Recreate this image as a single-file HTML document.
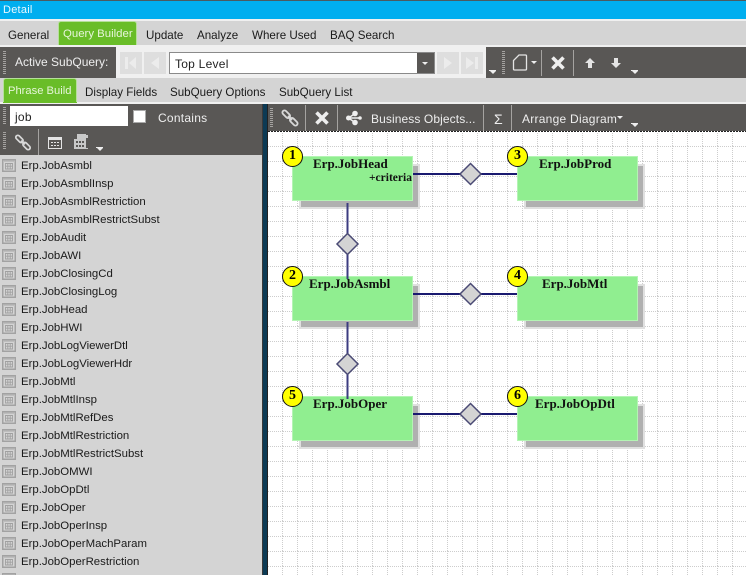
<!DOCTYPE html>
<html><head><meta charset="utf-8">
<style>
html,body{margin:0;padding:0;width:746px;height:575px;overflow:hidden}
#p{position:absolute;left:0;top:0;width:746px;height:575px;overflow:hidden;background:#d4d4d4;font-family:"Liberation Sans",sans-serif;font-size:12px;color:#111}
.a{position:absolute}
.t{position:absolute;white-space:nowrap;line-height:14px;letter-spacing:.25px}
.b{position:absolute;white-space:nowrap;line-height:14px;font-size:11.6px;color:#1a1a1a;margin-top:1px}
.w{color:#eee}
.sep{position:absolute;width:1px;background:#a5a3a1}
.grip{position:absolute;width:3px;background:repeating-linear-gradient(#a5a3a1 0 1px,transparent 1px 2px)}
.dd{position:absolute;width:0;height:0;border-left:3px solid transparent;border-right:3px solid transparent;border-top:3px solid #eee}
.ul{position:absolute;width:7px;height:1px;background:#eee}
.row{position:absolute;left:0;width:262px;height:18px}
.row span{position:absolute;left:21px;top:4px;line-height:14px;font-size:11.4px;color:#1a1a1a;white-space:nowrap}
.row svg{position:absolute;left:2px;top:4px}
.card{position:absolute;width:121px;height:45px;background:#90ee90;border:1px solid #b4f4b4;box-sizing:border-box;box-shadow:7px 8px 0 -2px #b0b0b0,7px 8px 0 0 #e0e0e0}
.n{position:absolute;font:bold 13px/16px "Liberation Serif",serif;color:#111;white-space:nowrap}
.c{position:absolute;width:21px;height:21px;border-radius:50%;background:#ff0;border:1px solid #111;box-sizing:border-box;text-align:center;font:bold 14px/17px "Liberation Serif",serif;color:#000}
</style></head><body><div id="p">
<svg width="0" height="0" style="position:absolute"><defs>
<symbol id="ti" viewBox="0 0 14 13"><rect x=".75" y=".75" width="12.500" height="11.500" fill="#d4d4d4" stroke="#a2a2a2" stroke-width="1.500"/><path d="M1 2.250h12" stroke="#bdbdbd" stroke-width="1.500"/><path d="M3.500 4.500h7v5.500h-7zM5.800 4.500v5.500M8.200 4.500v5.500M3.500 7.200h7" fill="none" stroke="#a0a0a0" stroke-width=".9"/></symbol>
<symbol id="lk" viewBox="0 0 18 18"><path d="M3.500 3.500l3.500 3.500M11 11l3.500 3.500" stroke="#d8d8d8" stroke-width="6" stroke-linecap="round"/><path d="M3.500 3.500l3.500 3.500M11 11l3.500 3.500" stroke="#595755" stroke-width="2.400" stroke-linecap="round"/><path d="M7 7l4 4" stroke="#d8d8d8" stroke-width="2"/></symbol>
</defs></svg>

<div class="a" style="left:0;top:0;width:746px;height:1px;background:#4a5a60"></div>
<div class="a" style="left:0;top:1px;width:746px;height:18px;background:#00aeef"></div>
<div class="t" style="left:3px;top:3px;color:#e8f8ff;font-size:11px">Detail</div>
<div class="a" style="left:0;top:19px;width:746px;height:2px;background:#f0f0f0"></div>
<div class="a" style="left:0;top:45px;width:746px;height:2px;background:#f0f0f0"></div>

<div class="b" style="left:8px;top:28px">General</div>
<div class="a" style="left:58px;top:21px;width:79px;height:24px;background:#69bd28;border:1px solid #b5e09a;border-bottom:0;border-radius:3px 3px 0 0;box-sizing:border-box"></div>
<div class="b" style="left:63px;top:26px;color:#e6f5da;font-size:11.4px">Query Builder</div>
<div class="b" style="left:146px;top:28px">Update</div>
<div class="b" style="left:197px;top:28px">Analyze</div>
<div class="b" style="left:252px;top:28px">Where Used</div>
<div class="b" style="left:330px;top:28px">BAQ Search</div>

<div class="a" style="left:0;top:47px;width:746px;height:31px;background:#595755"></div>
<div class="grip" style="left:3px;top:51px;height:23px"></div>
<div class="t w" style="left:15px;top:55px;letter-spacing:0">Active SubQuery:</div>
<div class="a" style="left:116px;top:47px;width:370px;height:31px;background:#f0f0f0"></div>
<div class="a" style="left:120px;top:52px;width:22px;height:22px;background:#dedede"></div>
<svg class="a" style="left:120px;top:52px" width="22" height="22"><path d="M5 5h3v12H5zM16 5v12L9 11z" fill="#ececec"/></svg>
<div class="a" style="left:144px;top:52px;width:22px;height:22px;background:#dedede"></div>
<svg class="a" style="left:144px;top:52px" width="22" height="22"><path d="M15 5v12L7 11z" fill="#ececec"/></svg>
<div class="a" style="left:169px;top:52px;width:266px;height:22px;background:#fff;border:1px solid #8a8a8a;box-sizing:border-box"></div>
<div class="t" style="left:175px;top:57px;color:#222">Top Level</div>
<div class="a" style="left:417px;top:53px;width:17px;height:20px;background:#595755"></div>
<div class="dd" style="left:422px;top:62px"></div>
<div class="a" style="left:437px;top:52px;width:22px;height:22px;background:#dedede"></div>
<svg class="a" style="left:437px;top:52px" width="22" height="22"><path d="M7 5v12l8-6z" fill="#ececec"/></svg>
<div class="a" style="left:461px;top:52px;width:22px;height:22px;background:#dedede"></div>
<svg class="a" style="left:461px;top:52px" width="22" height="22"><path d="M5 5v12l8-6zM14 5h3v12h-3z" fill="#ececec"/></svg>
<div class="ul" style="left:489px;top:70px"></div><div class="dd" style="left:489.500px;top:71px"></div>
<div class="grip" style="left:502px;top:51px;height:23px"></div>
<svg class="a" style="left:511px;top:53px" width="18" height="20"><path d="M8 2h6.500q1 0 1 1v13q0 1-1 1H3.500q-1 0-1-1V7.500z" fill="none" stroke="#e4e4e4" stroke-width="1.300"/></svg>
<div class="dd" style="left:531px;top:61px"></div>
<div class="sep" style="left:541px;top:50px;height:26px"></div>
<svg class="a" style="left:550px;top:55px" width="16" height="16"><path d="M2.500 2.500l11 11M13.500 2.500l-11 11" stroke="#eee" stroke-width="3.600"/></svg>
<div class="sep" style="left:573px;top:50px;height:26px"></div>
<svg class="a" style="left:583px;top:57px" width="14" height="12"><path d="M7 1l5 5H9v5H5V6H2z" fill="#e4e4e4"/></svg>
<svg class="a" style="left:609px;top:57px" width="14" height="12"><path d="M7 11l5-5H9V1H5v5H2z" fill="#e4e4e4"/></svg>
<div class="ul" style="left:631px;top:70px"></div><div class="dd" style="left:631.500px;top:71px"></div>

<div class="a" style="left:3px;top:78px;width:74px;height:25px;background:#69bd28;border:1px solid #b5e09a;border-bottom:0;border-radius:3px 3px 0 0;box-sizing:border-box"></div>
<div class="b" style="left:8px;top:83px;color:#e6f5da;font-size:11.200px">Phrase Build</div>
<div class="b" style="left:85px;top:85px">Display Fields</div>
<div class="b" style="left:170px;top:85px">SubQuery Options</div>
<div class="b" style="left:279px;top:85px">SubQuery List</div>
<div class="a" style="left:0;top:102px;width:746px;height:2px;background:#f0f0f0"></div>
<div class="a" style="left:3px;top:102px;width:74px;height:1px;background:#69bd28"></div>

<div class="a" style="left:0;top:104px;width:262px;height:51px;background:#595755"></div>
<div class="grip" style="left:3px;top:107px;height:18px"></div>
<div class="a" style="left:10px;top:106px;width:118px;height:20px;background:#fff"></div>
<div class="t" style="left:15px;top:110px;color:#222">job</div>
<div class="a" style="left:133px;top:110px;width:13px;height:13px;background:#fff;border:1px solid #aaa;box-sizing:border-box"></div>
<div class="t w" style="left:158px;top:111px">Contains</div>
<div class="grip" style="left:3px;top:132px;height:18px"></div>
<svg class="a" style="left:14px;top:134px" width="18" height="17"><use href="#lk"/></svg>
<div class="sep" style="left:38px;top:129px;height:26px"></div>
<svg class="a" style="left:48px;top:137px" width="15" height="12"><rect x=".5" y=".5" width="13" height="11" fill="none" stroke="#e4e4e4"/><path d="M1 2h12" stroke="#e4e4e4" stroke-width="2"/><path d="M3 5h2v1H3zM6 5h2v1H6zM9 5h2v1H9zM3 8h2v1H3zM6 8h2v1H6zM9 8h2v1H9z" fill="#e4e4e4"/></svg>
<svg class="a" style="left:73px;top:134px" width="17" height="16"><path d="M4 0h9v1h2v3h-2v10l2 0v1H1V5h3z" fill="#c8c8c8"/><path d="M3 7h2v2H3zM6 7h2v2H6zM9 7h2v2H9zM3 11h2v2H3zM6 11h2v2H6zM9 11h2v2H9z" fill="#595755"/></svg>
<div class="ul" style="left:96px;top:147px"></div><div class="dd" style="left:96.500px;top:148px"></div>

<div class="a" style="left:0;top:155px;width:262px;height:420px;background:#d4d4d4"></div>
<div class="a" style="left:262px;top:104px;width:1px;height:471px;background:#3a3a3a"></div>
<div class="a" style="left:263px;top:104px;width:4px;height:471px;background:#0c3a54"></div>
<div class="a" style="left:267px;top:104px;width:1px;height:471px;background:#222"></div>

<div class="row" style="top:155px"><svg width="14" height="13"><use href="#ti"/></svg><span>Erp.JobAsmbl</span></div>
<div class="row" style="top:173px"><svg width="14" height="13"><use href="#ti"/></svg><span>Erp.JobAsmblInsp</span></div>
<div class="row" style="top:191px"><svg width="14" height="13"><use href="#ti"/></svg><span>Erp.JobAsmblRestriction</span></div>
<div class="row" style="top:209px"><svg width="14" height="13"><use href="#ti"/></svg><span>Erp.JobAsmblRestrictSubst</span></div>
<div class="row" style="top:227px"><svg width="14" height="13"><use href="#ti"/></svg><span>Erp.JobAudit</span></div>
<div class="row" style="top:245px"><svg width="14" height="13"><use href="#ti"/></svg><span>Erp.JobAWI</span></div>
<div class="row" style="top:263px"><svg width="14" height="13"><use href="#ti"/></svg><span>Erp.JobClosingCd</span></div>
<div class="row" style="top:281px"><svg width="14" height="13"><use href="#ti"/></svg><span>Erp.JobClosingLog</span></div>
<div class="row" style="top:299px"><svg width="14" height="13"><use href="#ti"/></svg><span>Erp.JobHead</span></div>
<div class="row" style="top:317px"><svg width="14" height="13"><use href="#ti"/></svg><span>Erp.JobHWI</span></div>
<div class="row" style="top:335px"><svg width="14" height="13"><use href="#ti"/></svg><span>Erp.JobLogViewerDtl</span></div>
<div class="row" style="top:353px"><svg width="14" height="13"><use href="#ti"/></svg><span>Erp.JobLogViewerHdr</span></div>
<div class="row" style="top:371px"><svg width="14" height="13"><use href="#ti"/></svg><span>Erp.JobMtl</span></div>
<div class="row" style="top:389px"><svg width="14" height="13"><use href="#ti"/></svg><span>Erp.JobMtlInsp</span></div>
<div class="row" style="top:407px"><svg width="14" height="13"><use href="#ti"/></svg><span>Erp.JobMtlRefDes</span></div>
<div class="row" style="top:425px"><svg width="14" height="13"><use href="#ti"/></svg><span>Erp.JobMtlRestriction</span></div>
<div class="row" style="top:443px"><svg width="14" height="13"><use href="#ti"/></svg><span>Erp.JobMtlRestrictSubst</span></div>
<div class="row" style="top:461px"><svg width="14" height="13"><use href="#ti"/></svg><span>Erp.JobOMWI</span></div>
<div class="row" style="top:479px"><svg width="14" height="13"><use href="#ti"/></svg><span>Erp.JobOpDtl</span></div>
<div class="row" style="top:497px"><svg width="14" height="13"><use href="#ti"/></svg><span>Erp.JobOper</span></div>
<div class="row" style="top:515px"><svg width="14" height="13"><use href="#ti"/></svg><span>Erp.JobOperInsp</span></div>
<div class="row" style="top:533px"><svg width="14" height="13"><use href="#ti"/></svg><span>Erp.JobOperMachParam</span></div>
<div class="row" style="top:551px"><svg width="14" height="13"><use href="#ti"/></svg><span>Erp.JobOperRestriction</span></div>
<div class="row" style="top:569px"><svg width="14" height="13"><use href="#ti"/></svg></div>

<div class="a" style="left:268px;top:104px;width:478px;height:27px;background:#595755"></div>
<div class="grip" style="left:270px;top:108px;height:20px"></div>
<svg class="a" style="left:281px;top:109px" width="18" height="18"><use href="#lk"/></svg>
<div class="sep" style="left:305px;top:105px;height:26px"></div>
<svg class="a" style="left:314px;top:110px" width="16" height="16"><path d="M2.500 2.500l11 11M13.500 2.500l-11 11" stroke="#eee" stroke-width="3.600"/></svg>
<div class="sep" style="left:337px;top:105px;height:26px"></div>
<svg class="a" style="left:346px;top:110px" width="16" height="16"><g fill="#eee"><circle cx="9" cy="3.500" r="2.800"/><circle cx="9" cy="12.500" r="2.800"/><circle cx="2.500" cy="8" r="2.500"/><circle cx="14" cy="8" r="1.800"/></g><path d="M2.500 8L9 3.500M2.500 8L9 12.500M2.500 8H14" stroke="#eee" stroke-width="1.400"/></svg>
<div class="t w" style="left:371px;top:112px;letter-spacing:.1px">Business Objects...</div>
<div class="sep" style="left:483px;top:105px;height:26px"></div>
<div class="t w" style="left:494px;top:112px;font-size:14px">Σ</div>
<div class="sep" style="left:511px;top:105px;height:26px"></div>
<div class="t w" style="left:522px;top:112px">Arrange Diagram</div>
<div class="dd" style="left:617px;top:116px"></div>
<div class="ul" style="left:631px;top:123px"></div><div class="dd" style="left:631.500px;top:124px"></div>

<div class="a" style="left:268px;top:131px;width:478px;height:444px;overflow:hidden;background:#fff">
<svg width="478" height="444" style="position:absolute;left:0;top:0" shape-rendering="crispEdges"><defs><pattern id="g" width="15" height="15" patternUnits="userSpaceOnUse"><rect width="15" height="15" fill="#fff"/><path d="M14.500 0v15M0 .5h15" stroke="#cdcdcd" stroke-dasharray="1 1" fill="none" stroke-width="1"/></pattern></defs><rect width="478" height="444" fill="url(#g)"/></svg>
<div class="a" style="left:0;top:0;width:478px;height:1px;background:repeating-linear-gradient(to right,#222 0 2px,#fff 2px 3px)"></div>
</div>

<div class="card" style="left:292px;top:156px"></div>
<div class="card" style="left:517px;top:156px"></div>
<div class="card" style="left:292px;top:276px"></div>
<div class="card" style="left:517px;top:276px"></div>
<div class="card" style="left:292px;top:396px"></div>
<div class="card" style="left:517px;top:396px"></div>

<svg class="a" style="left:268px;top:131px" width="478" height="444"><g stroke-width="2" fill="none"><path d="M145 43h104M145 163h104M145 283h104" stroke="#1a1a70"/><path d="M79.500 72v76M79.500 191v77" stroke="#3c3c80"/></g><g fill="#d4d4d4" stroke="#4a4a74" stroke-width="1.500"><path d="M202.500 32.500l10.500 10.500-10.500 10.500-10.500-10.500z"/><path d="M202.500 152.500l10.500 10.500-10.500 10.500-10.500-10.500z"/><path d="M202.500 272.500l10.500 10.500-10.500 10.500-10.500-10.500z"/><path d="M79.500 102.500l10.500 10.500-10.500 10.500-10.500-10.500z"/><path d="M79.500 222.500l10.500 10.500-10.500 10.500-10.500-10.500z"/></g></svg>

<div class="n" style="left:313px;top:156px">Erp.JobHead</div>
<div class="n" style="left:369px;top:171px;font-size:11.500px;line-height:14px">+criteria</div>
<div class="n" style="left:539px;top:156px">Erp.JobProd</div>
<div class="n" style="left:309px;top:276px">Erp.JobAsmbl</div>
<div class="n" style="left:542px;top:276px">Erp.JobMtl</div>
<div class="n" style="left:313px;top:396px">Erp.JobOper</div>
<div class="n" style="left:535px;top:396px">Erp.JobOpDtl</div>

<div class="c" style="left:282px;top:146px">1</div>
<div class="c" style="left:507px;top:146px">3</div>
<div class="c" style="left:282px;top:266px">2</div>
<div class="c" style="left:507px;top:266px">4</div>
<div class="c" style="left:282px;top:386px">5</div>
<div class="c" style="left:507px;top:386px">6</div>
</div></body></html>
